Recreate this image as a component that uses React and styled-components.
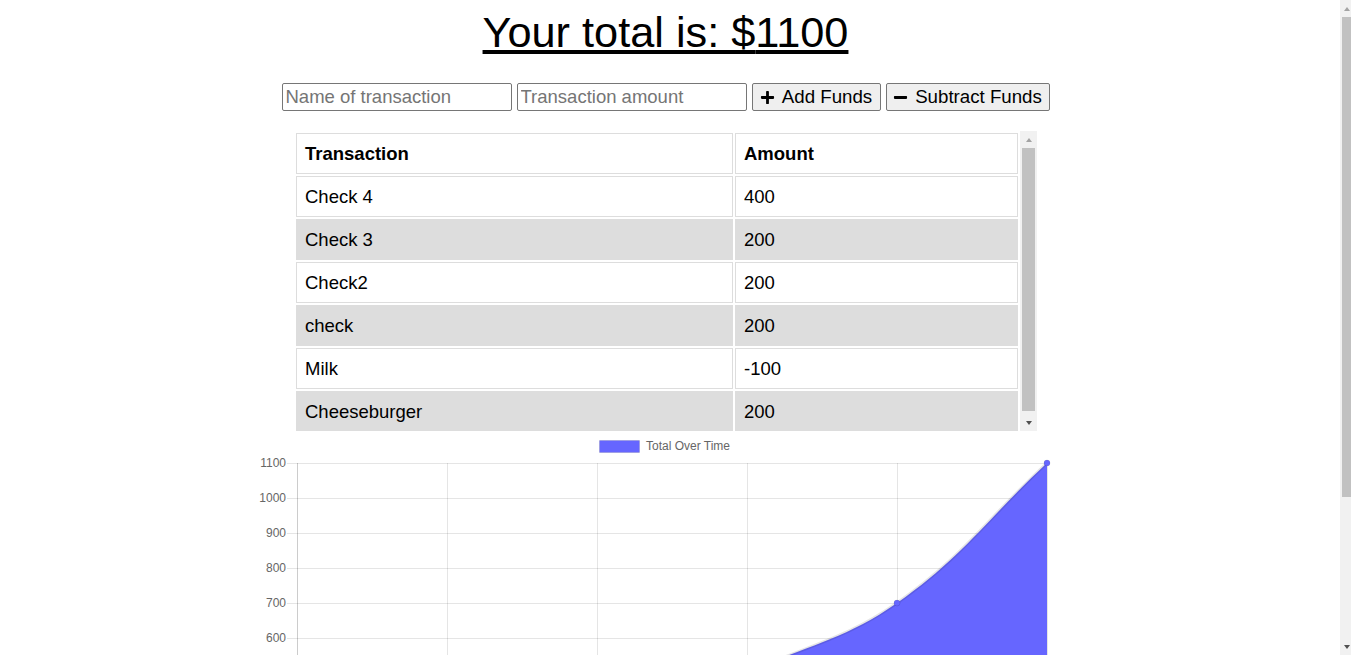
import styled, { createGlobalStyle } from 'styled-components'
import { FaPlus, FaMinus } from 'react-icons/fa'

const transactions = [
    { name: 'Check 4', value: 400 },
    { name: 'Check 3', value: 200 },
    { name: 'Check2', value: 200 },
    { name: 'check', value: 200 },
    { name: 'Milk', value: -100 },
    { name: 'Cheeseburger', value: 200 },
]

const GlobalStyle = createGlobalStyle`
    html, body {
        overflow: hidden;
    }
    body {
        margin: 8px;
        background: #fff;
        color: #000;
        font-family: "Liberation Sans", Arial, sans-serif;
        font-size: 18.5px;
    }
`

const Wrapper = styled.div`
    width: 1315px;
    text-align: center;
`

const Total = styled.h1`
    margin: 0;
    font-size: 43.3px;
    font-weight: normal;
    line-height: 48px;
    text-decoration: underline;
`

const Form = styled.div`
    margin-top: 27px;
    display: flex;
    justify-content: center;
    gap: 5px;
`

const Input = styled.input`
    box-sizing: border-box;
    width: 230px;
    height: 28px;
    padding: 1px 3px;
    border: 1px solid #767676;
    border-radius: 2px;
    font-family: inherit;
    font-size: 18.5px;
    color: #000;
    &::placeholder {
        color: #757575;
    }
`

const Button = styled.button`
    box-sizing: border-box;
    width: ${p => p.$w}px;
    height: 28px;
    display: flex;
    align-items: center;
    justify-content: center;
    gap: 7px;
    padding: 0;
    background: #efefef;
    border: 1px solid #767676;
    border-radius: 2px;
    font-family: inherit;
    font-size: 18.7px;
    color: #000;
`

const TableBox = styled.div`
    width: 743px;
    height: 300px;
    margin: 20px auto 0;
    display: flex;
    text-align: left;
`

const TableViewport = styled.div`
    flex: 1;
    overflow: hidden;
`

const Table = styled.table`
    width: 726px;
    table-layout: fixed;
    border-collapse: separate;
    border-spacing: 2px;
`

const Cell = styled.td`
    box-sizing: border-box;
    height: 41px;
    padding: 9px 8px;
    line-height: 21px;
    border: 1px solid #ddd;
    font-weight: ${p => (p.$head ? 'bold' : 'normal')};
    background: ${p => (p.$shade ? '#ddd' : '#fff')};
`

const Track = styled.div`
    width: ${p => p.$w}px;
    flex: none;
    display: flex;
    flex-direction: column;
    background: #f1f1f1;
`

const PageTrack = styled(Track)`
    position: fixed;
    top: 0;
    right: 0;
    height: 100vh;
`

const Arrow = styled.div`
    height: 17px;
    flex: none;
    display: flex;
    align-items: center;
    justify-content: ${p => (p.$page ? 'flex-start' : 'center')};
    padding-left: ${p => (p.$page ? '4px' : '0')};
    &::after {
        content: '';
        border-left: 3.5px solid transparent;
        border-right: 3.5px solid transparent;
        ${p => (p.$down
            ? 'border-top: 4px solid #505050;'
            : 'border-bottom: 4px solid #a3a3a3;')}
    }
`

const Thumb = styled.div`
    height: ${p => p.$h}px;
    margin: 0 ${p => (p.$page ? '0' : '2px')} 0 2px;
    background: #c1c1c1;
`

const Spacer = styled.div`
    flex: 1;
`

const Chart = styled.svg`
    display: block;
    margin: 0 auto;
    font-family: "Liberation Sans", Arial, sans-serif;
`

const xs = [297, 447, 597, 747, 897, 1047]
const ys = [463, 498, 533, 568, 603, 638, 673, 708, 743, 778, 813]

const points = (() => {
    let sum = 0
    return [...transactions].reverse().map((t, i) => {
        sum += t.value
        return { x: xs[i], y: 463 + (1100 - sum) * 0.35 }
    })
})()

const curve =
    'M297,778 C357,792 389.16,813 447,813 C509.16,805.75 537,771 597,743 ' +
    'C657,715 687,701 747,673 C807,645 843.42,640.5 897,603 C963.42,556.5 987,519 1047,463'

const TotalChart = () => (
    <Chart width="841" height="410" viewBox="0 0 841 410">
        <g transform="translate(-245,-431)">
            <rect x="599.5" y="440.5" width="40" height="12" fill="#6666ff" stroke="rgba(0,0,0,0.1)" />
            <text x="646" y="450" fontSize="12" fill="#666">Total Over Time</text>

            {ys.map((y, i) => (
                <g key={y}>
                    <line x1="287" x2="1047" y1={y + 0.5} y2={y + 0.5} stroke="rgba(0,0,0,0.1)" />
                    <text x="286" y={y + 4} fontSize="12" fill="#666" textAnchor="end">{1100 - i * 100}</text>
                </g>
            ))}
            {xs.map((x, i) => (
                <line key={x} x1={x + 0.5} x2={x + 0.5} y1="463" y2="823"
                    stroke={i === 0 ? 'rgba(0,0,0,0.2)' : 'rgba(0,0,0,0.1)'} />
            ))}

            <path d={curve + ' L1047,813 L297,813 Z'} fill="#6666ff" />
            <path d={curve} fill="none" stroke="rgba(0,0,0,0.1)" strokeWidth="3" />
            {points.map(p => (
                <circle key={p.x} cx={p.x} cy={p.y} r="3" fill="#6666ff" stroke="rgba(0,0,0,0.1)" />
            ))}
        </g>
    </Chart>
)

const App = () => {
    const total = transactions.reduce((s, t) => s + t.value, 0)

    return (
        <Wrapper>
            <GlobalStyle />
            <Total>Your total is: ${total}</Total>
            <Form>
                <Input type="text" placeholder="Name of transaction" />
                <Input type="number" placeholder="Transaction amount" />
                <Button $w={129}><FaPlus size={15} />Add Funds</Button>
                <Button $w={164}><FaMinus size={15} />Subtract Funds</Button>
            </Form>
            <TableBox>
                <TableViewport>
                    <Table>
                        <colgroup>
                            <col style={{ width: 437 }} />
                            <col style={{ width: 283 }} />
                        </colgroup>
                        <thead>
                            <tr>
                                <Cell as="th" $head>Transaction</Cell>
                                <Cell as="th" $head>Amount</Cell>
                            </tr>
                        </thead>
                        <tbody>
                            {transactions.map((t, i) => (
                                <tr key={t.name}>
                                    <Cell $shade={i % 2 === 1}>{t.name}</Cell>
                                    <Cell $shade={i % 2 === 1}>{t.value}</Cell>
                                </tr>
                            ))}
                        </tbody>
                    </Table>
                </TableViewport>
                <Track $w={17}>
                    <Arrow />
                    <Thumb $h={263} />
                    <Spacer />
                    <Arrow $down />
                </Track>
            </TableBox>
            <TotalChart />
            <PageTrack $w={11}>
                <Arrow $page />
                <Thumb $page $h={480} />
                <Spacer />
                <Arrow $page $down />
            </PageTrack>
        </Wrapper>
    )
}

export default App
